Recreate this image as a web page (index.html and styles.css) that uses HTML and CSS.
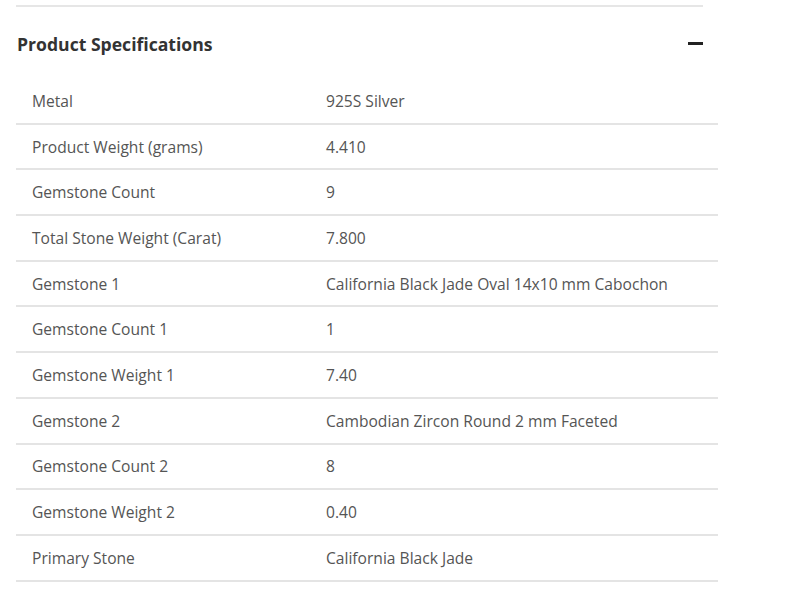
FILE: index.html
```html
<!DOCTYPE html>
<html>
<head>
<meta charset="utf-8">
<link rel="stylesheet" href="styles.css">
</head>
<body>
<div class="page">
  <div class="section">
    <div class="head">
      <h2 class="title">Product Specifications</h2>
      <span class="minus"></span>
    </div>
    <table class="specs">
      <tr><td class="k">Metal</td><td class="v">925S Silver</td></tr>
      <tr><td class="k">Product Weight (grams)</td><td class="v">4.410</td></tr>
      <tr><td class="k">Gemstone Count</td><td class="v">9</td></tr>
      <tr><td class="k">Total Stone Weight (Carat)</td><td class="v">7.800</td></tr>
      <tr><td class="k">Gemstone 1</td><td class="v">California Black Jade Oval 14x10 mm Cabochon</td></tr>
      <tr><td class="k">Gemstone Count 1</td><td class="v">1</td></tr>
      <tr><td class="k">Gemstone Weight 1</td><td class="v">7.40</td></tr>
      <tr><td class="k">Gemstone 2</td><td class="v">Cambodian Zircon Round 2 mm Faceted</td></tr>
      <tr><td class="k">Gemstone Count 2</td><td class="v">8</td></tr>
      <tr><td class="k">Gemstone Weight 2</td><td class="v">0.40</td></tr>
      <tr><td class="k">Primary Stone</td><td class="v">California Black Jade</td></tr>
    </table>
  </div>
</div>
</body>
</html>
```

FILE: styles.css
```css
html, body {
  margin: 0;
  padding: 0;
  background: #fff;
}
body {
  font-family: "Open Sans", "Liberation Sans", sans-serif;
  color: #555;
}
.page {
  padding: 5px 82px 0 16px;
}
.section {
  width: 702px;
}
.head {
  width: 687px;
  border-top: 2px solid #e6e6e6;
  display: flex;
  align-items: center;
  justify-content: space-between;
  height: 74px;
  box-sizing: border-box;
  padding-top: 1px;
}
.title {
  margin: 0 0 0 1px;
  font-size: 17.6px;
  font-weight: 700;
  color: #333;
}
.minus {
  width: 15px;
  height: 3px;
  background: #222;
  margin-top: -1px;
}
.specs {
  width: 702px;
  border-collapse: collapse;
}
.specs td {
  height: 43.7px;
  padding: 0;
  font-size: 15.6px;
  border-bottom: 2px solid #e4e4e4;
  vertical-align: middle;
}
.specs .k {
  width: 294px;
  padding-left: 16px;
}
```
